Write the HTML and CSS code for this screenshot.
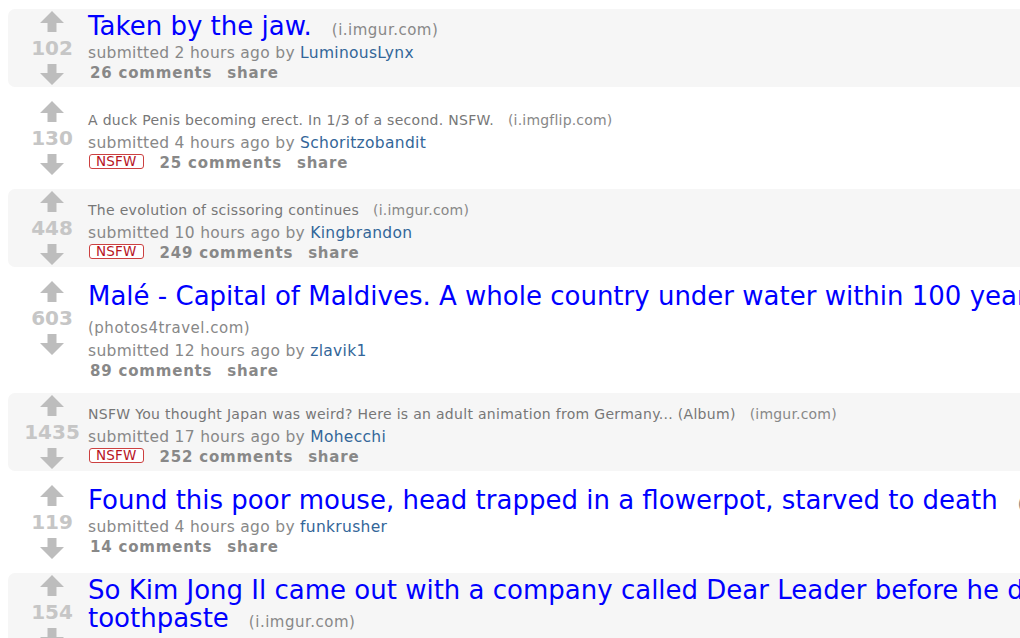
FILE: index.html
```html
<!DOCTYPE html>
<html>
<head>
<meta charset="utf-8">
<link rel="stylesheet" href="styles.css">
</head>
<body>
<div class="list">

  <div class="thing odd">
    <div class="midcol">
      <svg class="arrow" viewBox="0 0 24 21"><polygon points="12,0 24,12 16.5,12 16.5,21 7.5,21 7.5,12 0,12"/></svg>
      <div class="score">102</div>
      <svg class="arrow" viewBox="0 0 24 21"><polygon points="7.5,0 16.5,0 16.5,9 24,9 12,21 0,9 7.5,9"/></svg>
    </div>
    <div class="entry">
      <p class="title"><a class="title-link big">Taken by the jaw.</a><span class="domain big-domain">(i.imgur.com)</span></p>
      <p class="tagline">submitted 2 hours ago by <a class="author">LuminousLynx</a></p>
      <ul class="buttons"><li>26 comments</li><li>share</li></ul>
    </div>
  </div>

  <div class="thing">
    <div class="midcol">
      <svg class="arrow" viewBox="0 0 24 21"><polygon points="12,0 24,12 16.5,12 16.5,21 7.5,21 7.5,12 0,12"/></svg>
      <div class="score">130</div>
      <svg class="arrow" viewBox="0 0 24 21"><polygon points="7.5,0 16.5,0 16.5,9 24,9 12,21 0,9 7.5,9"/></svg>
    </div>
    <div class="entry">
      <p class="title"><a class="title-link small">A duck Penis becoming erect. In 1/3 of a second. NSFW.</a><span class="domain small-domain">(i.imgflip.com)</span></p>
      <p class="tagline">submitted 4 hours ago by <a class="author">Schoritzobandit</a></p>
      <ul class="buttons"><li class="nsfw">NSFW</li><li>25 comments</li><li>share</li></ul>
    </div>
  </div>

  <div class="thing odd">
    <div class="midcol">
      <svg class="arrow" viewBox="0 0 24 21"><polygon points="12,0 24,12 16.5,12 16.5,21 7.5,21 7.5,12 0,12"/></svg>
      <div class="score">448</div>
      <svg class="arrow" viewBox="0 0 24 21"><polygon points="7.5,0 16.5,0 16.5,9 24,9 12,21 0,9 7.5,9"/></svg>
    </div>
    <div class="entry">
      <p class="title"><a class="title-link small">The evolution of scissoring continues</a><span class="domain small-domain">(i.imgur.com)</span></p>
      <p class="tagline">submitted 10 hours ago by <a class="author">Kingbrandon</a></p>
      <ul class="buttons"><li class="nsfw">NSFW</li><li>249 comments</li><li>share</li></ul>
    </div>
  </div>

  <div class="thing">
    <div class="midcol">
      <svg class="arrow" viewBox="0 0 24 21"><polygon points="12,0 24,12 16.5,12 16.5,21 7.5,21 7.5,12 0,12"/></svg>
      <div class="score">603</div>
      <svg class="arrow" viewBox="0 0 24 21"><polygon points="7.5,0 16.5,0 16.5,9 24,9 12,21 0,9 7.5,9"/></svg>
    </div>
    <div class="entry">
      <p class="title"><a class="title-link big">Malé - Capital of Maldives. A whole country under water within 100 years</a><span class="domain big-domain wrapped">(photos4travel.com)</span></p>
      <p class="tagline">submitted 12 hours ago by <a class="author">zlavik1</a></p>
      <ul class="buttons"><li>89 comments</li><li>share</li></ul>
    </div>
  </div>

  <div class="thing odd">
    <div class="midcol">
      <svg class="arrow" viewBox="0 0 24 21"><polygon points="12,0 24,12 16.5,12 16.5,21 7.5,21 7.5,12 0,12"/></svg>
      <div class="score">1435</div>
      <svg class="arrow" viewBox="0 0 24 21"><polygon points="7.5,0 16.5,0 16.5,9 24,9 12,21 0,9 7.5,9"/></svg>
    </div>
    <div class="entry">
      <p class="title"><a class="title-link small">NSFW You thought Japan was weird? Here is an adult animation from Germany... (Album)</a><span class="domain small-domain">(imgur.com)</span></p>
      <p class="tagline">submitted 17 hours ago by <a class="author">Mohecchi</a></p>
      <ul class="buttons"><li class="nsfw">NSFW</li><li>252 comments</li><li>share</li></ul>
    </div>
  </div>

  <div class="thing">
    <div class="midcol">
      <svg class="arrow" viewBox="0 0 24 21"><polygon points="12,0 24,12 16.5,12 16.5,21 7.5,21 7.5,12 0,12"/></svg>
      <div class="score">119</div>
      <svg class="arrow" viewBox="0 0 24 21"><polygon points="7.5,0 16.5,0 16.5,9 24,9 12,21 0,9 7.5,9"/></svg>
    </div>
    <div class="entry">
      <p class="title"><a class="title-link big">Found this poor mouse, head trapped in a flowerpot, starved to death</a><span class="domain big-domain">(i.imgur.com)</span></p>
      <p class="tagline">submitted 4 hours ago by <a class="author">funkrusher</a></p>
      <ul class="buttons"><li>14 comments</li><li>share</li></ul>
    </div>
  </div>

  <div class="thing odd">
    <div class="midcol">
      <svg class="arrow" viewBox="0 0 24 21"><polygon points="12,0 24,12 16.5,12 16.5,21 7.5,21 7.5,12 0,12"/></svg>
      <div class="score">154</div>
      <svg class="arrow" viewBox="0 0 24 21"><polygon points="7.5,0 16.5,0 16.5,9 24,9 12,21 0,9 7.5,9"/></svg>
    </div>
    <div class="entry">
      <p class="title"><a class="title-link big">So Kim Jong Il came out with a company called Dear Leader before he died, toothpaste</a><span class="domain big-domain">(i.imgur.com)</span></p>
      <p class="tagline">submitted 6 hours ago by <a class="author">someone</a></p>
      <ul class="buttons"><li>comments</li><li>share</li></ul>
    </div>
  </div>

</div>
</body>
</html>
```

FILE: styles.css
```css
html, body {
  margin: 0;
  padding: 0;
  overflow: hidden;
  background: #ffffff;
}

body {
  font-family: "DejaVu Sans", Verdana, sans-serif;
  color: #888888;
}

.list {
  width: 1150px;
  padding: 9px 0 0 8px;
}

.thing {
  display: flex;
  align-items: flex-start;
  padding: 3px 0 0 0;
  margin-bottom: 12px;
  border-radius: 7px;
}

.thing.odd {
  background: #f6f6f6;
}

.midcol {
  width: 72px;
  margin: -1px 0 2px 8px;
  display: flex;
  flex-direction: column;
  align-items: center;
  flex: none;
}

.arrow {
  width: 24px;
  height: 21px;
  display: block;
  fill: #bdbdbd;
}

.score {
  height: 32px;
  line-height: 32px;
  font-size: 20px;
  font-weight: bold;
  color: #c6c6c6;
  white-space: nowrap;
}

.entry {
  flex: 1;
  min-width: 0;
}

.title {
  margin: 0;
  padding-bottom: 4px;
  font-size: 26px;
  line-height: 28px;
}

.title-link {
  text-decoration: none;
}

.title-link.big {
  color: #0000ff;
}

.title-link.small {
  font-size: 14px;
  line-height: 16px;
  letter-spacing: 0.3px;
  color: #777777;
}

.domain {
  font-size: 15px;
  letter-spacing: 0.5px;
  line-height: 16px;
  color: #888888;
  white-space: nowrap;
  display: inline-block;
}

.big-domain {
  margin-left: 20px;
}

.big-domain.wrapped {
  margin-left: 0;
}

.small-domain {
  font-size: 14px;
  letter-spacing: 0.2px;
  margin-left: 14px;
}

.tagline {
  margin: 0;
  font-size: 15.5px;
  letter-spacing: 0.3px;
  line-height: 19px;
  color: #888888;
}

.author {
  color: #336699;
  text-decoration: none;
}

.buttons {
  list-style: none;
  margin: 1px 0 0 0;
  padding: 0 0 0 2px;
  display: flex;
  align-items: baseline;
  gap: 15px;
  font-size: 15px;
  letter-spacing: 0.8px;
  line-height: 19px;
  font-weight: bold;
  color: #888888;
}

.buttons .nsfw {
  align-self: flex-start;
  margin: 0 1px 0 -1px;
  height: 13px;
  font-weight: normal;
  font-size: 13.5px;
  letter-spacing: 0.2px;
  line-height: 13px;
  color: #b8141f;
  border: 1px solid #cc4040;
  border-radius: 3px;
  padding: 0 6px;
  background: #ffffff;
}
```
